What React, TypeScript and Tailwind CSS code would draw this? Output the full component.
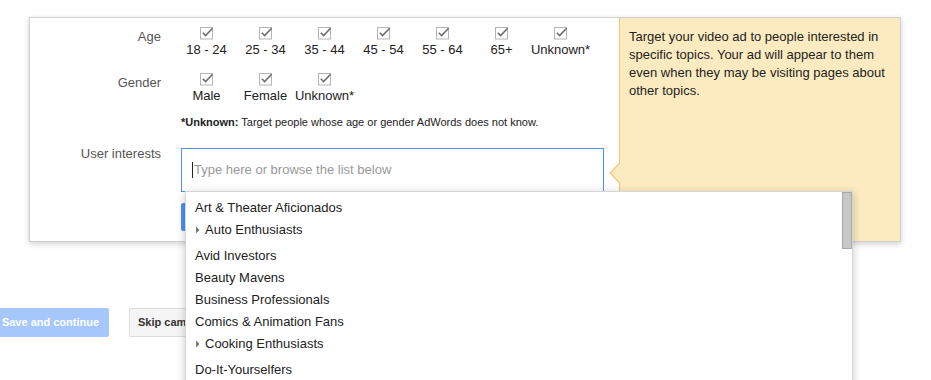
import React from "react";

function Check() {
  return (
    <svg width="14" height="13" viewBox="0 0 14 13" className="block">
      <rect x="0.5" y="0.5" width="12" height="11.5" fill="#fff" stroke="#b5b5b5" />
      <polyline points="2.8,5.8 5.6,8.6 12.6,1.2" fill="none" stroke="#6e6e6e" strokeWidth="1.6" />
    </svg>
  );
}

function Opt({ label }: { label: string }) {
  return (
    <div className="flex w-[59px] flex-col items-center">
      <Check />
      <div className="mt-[2px] whitespace-nowrap text-[13px] leading-[16px] text-[#222]">{label}</div>
    </div>
  );
}

const ages = ["18 - 24", "25 - 34", "35 - 44", "45 - 54", "55 - 64", "65+", "Unknown*"];
const genders = ["Male", "Female", "Unknown*"];

const items: { t: string; arrow?: boolean }[] = [
  { t: "Art & Theater Aficionados" },
  { t: "Auto Enthusiasts", arrow: true },
  { t: "Avid Investors" },
  { t: "Beauty Mavens" },
  { t: "Business Professionals" },
  { t: "Comics & Animation Fans" },
  { t: "Cooking Enthusiasts", arrow: true },
  { t: "Do-It-Yourselfers" },
];

export default function App() {
  return (
    <div className="relative h-[380px] w-[931px] overflow-hidden bg-white font-['Liberation_Sans',Arial,sans-serif]">
      {/* card */}
      <div className="ml-[29px] mt-[17px] flex h-[225px] w-[872px] shadow-[0_2px_6px_rgba(0,0,0,0.18)]">
        <div className="w-[590px] border border-r-0 border-[#cfcfcf] bg-white pt-[9px]">
          {/* Age */}
          <div className="flex">
            <div className="mt-[2px] w-[131px] text-right text-[13px] leading-[16px] text-[#555]">Age</div>
            <div className="ml-[16px] flex">
              {ages.map((a) => (
                <Opt key={a} label={a} />
              ))}
            </div>
          </div>
          {/* Gender */}
          <div className="mt-[15px] flex">
            <div className="mt-[2px] w-[131px] text-right text-[13px] leading-[16px] text-[#555]">Gender</div>
            <div className="ml-[16px] flex">
              {genders.map((a, i) => (
                <Opt key={a + i} label={a} />
              ))}
            </div>
          </div>
          {/* note */}
          <div className="ml-[151px] mt-[11px] text-[11px] leading-[14px] text-[#222]">
            <b>*Unknown:</b> Target people whose age or gender AdWords does not know.
          </div>
          {/* interests */}
          <div className="mt-[17px] flex">
            <div className="w-[131px] text-right text-[13px] leading-[16px] text-[#555]">User interests</div>
            <div className="ml-[20px] mt-[2px] flex flex-col">
              <div className="flex h-[44px] w-[423px] items-center border border-[#4d90fe] pl-[10px] text-[13px] text-[#999]">
                <span className="mr-[1px] inline-block h-[16px] w-px bg-[#222]" />
                Type here or browse the list below
              </div>
              <div className="mt-[11px] h-[28px] w-[80px] rounded-[2px] bg-[#4d90fe]" />
            </div>
          </div>
        </div>
        <div className="relative w-[282px] border border-l-0 border-[#cfcfcf] bg-[#fcebc0]">
          <div className="absolute bottom-0 left-0 top-0 w-px bg-[#f5c477]" />
          <svg width="11" height="20" viewBox="0 0 11 20" className="absolute left-[-10px] top-[145px]">
            <polygon points="11,0 1.5,10 11,20" fill="#fcebc0" />
            <polyline points="10.5,0 1.2,10 10.5,20" fill="none" stroke="#f5c477" strokeWidth="1.2" />
          </svg>
          <p className="px-[10px] pt-[10px] text-[13px] leading-[18px] text-[#222]">
            Target your video ad to people interested in specific topics. Your ad will appear to them even when they may
            be visiting pages about other topics.
          </p>
        </div>
      </div>

      {/* bottom buttons */}
      <div className="mt-[66px] flex gap-[20px]">
        <div className="ml-[-8px] flex h-[29px] w-[117px] items-center justify-center rounded-[2px] bg-[#a6c7fb] text-[11px] font-bold text-white">
          Save and continue
        </div>
        <div className="flex h-[29px] w-[56px] items-center overflow-hidden whitespace-nowrap rounded-l-[2px] border border-r-0 border-[#dcdcdc] bg-[#f5f5f5] pl-[8px] text-[11px] font-bold text-[#333]">
          Skip cam
        </div>
      </div>

      {/* dropdown */}
      <div className="absolute left-[185px] top-[191px] h-[220px] w-[668px] border border-[#d6d6d6] bg-white pt-[5px] shadow-[0_2px_8px_rgba(0,0,0,0.22)]">
        <div className="absolute right-[0px] top-[0px] h-[57px] w-[10px] border border-[#a9a9a9] bg-[#c8c8c8]" />
        {items.map((it) => (
          <div
            key={it.t}
            className={
              "flex h-[22px] items-center text-[13px] text-[#222] " + (it.arrow ? "mb-[4px] pl-[10px]" : "pl-[9px]")
            }
          >
            {it.arrow && (
              <svg width="9" height="8" viewBox="0 0 9 8">
                <polygon points="0,0.5 3.5,4 0,7.5" fill="#777" />
              </svg>
            )}
            {it.t}
          </div>
        ))}
      </div>
    </div>
  );
}
